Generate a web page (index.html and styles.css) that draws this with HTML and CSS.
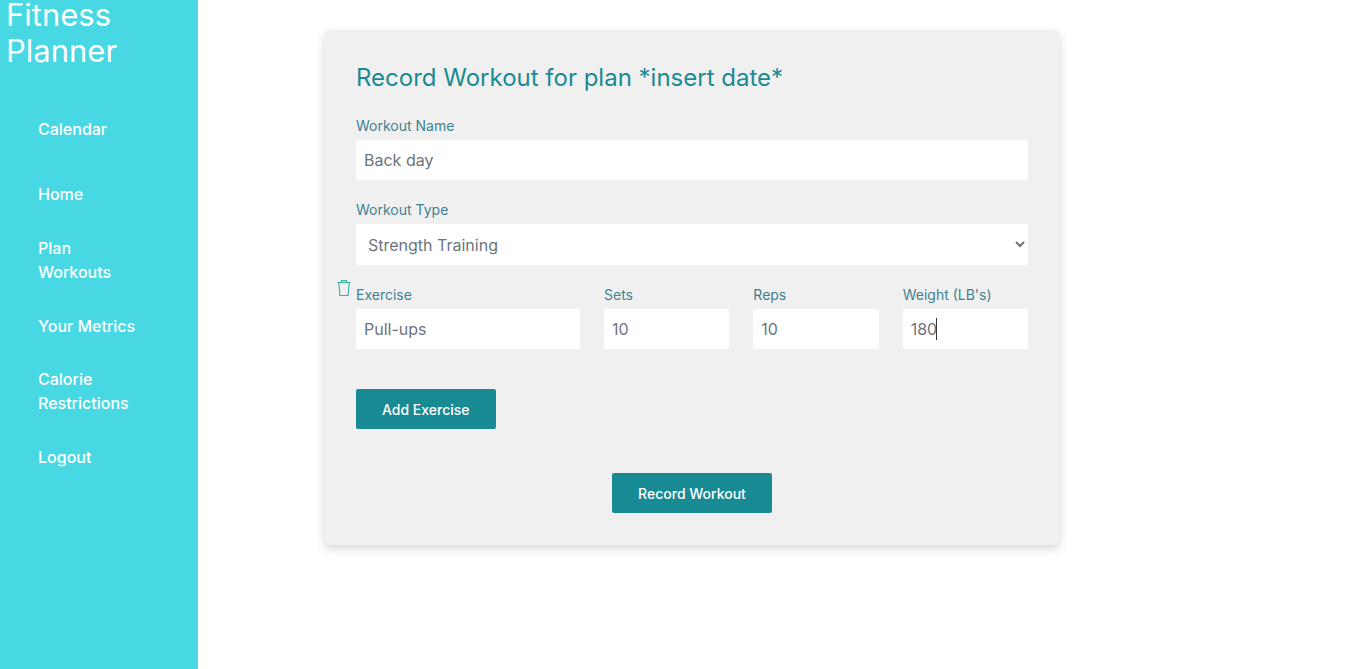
FILE: index.html
```html
<!DOCTYPE html>
<html lang="en">
  <head>
    <meta charset="UTF-8" />
    <meta name="viewport" content="width=device-width, initial-scale=1.0" />
    <title>Fitness Planner</title>
    <link rel="stylesheet" href="styles.css">
  </head>
  <body>
    <aside class="sidebar">
      <h1 class="brand">Fitness Planner</h1>
      <nav class="nav">
        <a href="#">Calendar</a>
        <a href="#">Home</a>
        <a href="#">Plan Workouts</a>
        <a href="#">Your Metrics</a>
        <a href="#">Calorie Restrictions</a>
        <a href="#">Logout</a>
      </nav>
    </aside>

    <main class="main">
      <form class="card">
        <h2>Record Workout for plan *insert date*</h2>

        <div class="field">
          <label>Workout Name</label>
          <input type="text" value="Back day" />
        </div>

        <div class="field">
          <label>Workout Type</label>
          <select>
            <option>Strength Training</option>
            <option>Cardio</option>
          </select>
        </div>

        <div class="exercise">
          <svg class="trash" width="16" height="18" viewBox="0 0 16 18" fill="none" stroke="currentColor" stroke-width="1.1">
            <path d="M1.5 3.5h13" />
            <path d="M5.5 3.5V1.5h5v2" />
            <path d="M2.8 3.5l1.1 13h8.2l1.1-13" />
          </svg>
          <div class="field">
            <label>Exercise</label>
            <input type="text" value="Pull-ups" />
          </div>
          <div class="field">
            <label>Sets</label>
            <input type="text" value="10" />
          </div>
          <div class="field">
            <label>Reps</label>
            <input type="text" value="10" />
          </div>
          <div class="field caret-field">
            <label>Weight (LB's)</label>
            <input type="text" value="180" />
            <span class="caret"></span>
          </div>
        </div>

        <button type="button" class="btn">Add Exercise</button>
        <div class="submit-row">
          <button type="button" class="btn">Record Workout</button>
        </div>
      </form>
    </main>
  </body>
</html>
```

FILE: styles.css
```css
* {
  box-sizing: border-box;
}
html,
body {
  height: 100%;
}
body {
  margin: 0;
  display: flex;
  font-family: "Inter", "Open Sans", sans-serif;
  background: white;
  overflow: hidden;
}
.sidebar {
  width: 198px;
  flex-shrink: 0;
  background: #48d8e4;
  color: white;
}
.brand {
  margin: -3px 0 0 6px;
  font-size: 31px;
  font-weight: 400;
  line-height: 36px;
  width: 150px;
}
.nav {
  display: flex;
  flex-direction: column;
  margin-top: 27px;
}
.nav a {
  height: 65.6px;
  padding: 0 50px 0 38px;
  display: flex;
  align-items: center;
  color: white;
  font-size: 16px;
  line-height: 24px;
  font-weight: 500;
  text-decoration: none;
}
.main {
  padding: 30px 0 0 126px;
}
.card {
  width: 736px;
  padding: 32px;
  background: #f0f0f0;
  border-radius: 6px;
  box-shadow: 0 4px 10px rgba(0, 0, 0, 0.15);
}
h2 {
  margin: 0 0 22px;
  font-size: 24px;
  line-height: 32px;
  font-weight: 400;
  color: #1a8a94;
}
.field {
  margin-bottom: 20px;
}
label {
  display: block;
  height: 20px;
  margin-bottom: 4px;
  font-size: 14px;
  line-height: 20px;
  color: #3f8390;
}
input,
select {
  display: block;
  width: 100%;
  height: 40px;
  padding: 0 8px;
  border: none;
  border-radius: 0;
  background: white;
  font-family: inherit;
  font-size: 16px;
  color: #6c757d;
}
select {
  height: 41px;
}
.exercise {
  position: relative;
  display: grid;
  grid-template-columns: 224px 1fr 1fr 1fr;
  gap: 24px;
  margin-top: 19px;
}
.exercise .field {
  margin-bottom: 0;
}
.trash {
  position: absolute;
  left: -20px;
  top: -6px;
  color: #3fae9f;
}
.caret-field {
  position: relative;
}
.caret {
  position: absolute;
  left: 33px;
  top: 33px;
  width: 1px;
  height: 22px;
  background: #333;
}
.btn {
  display: block;
  height: 40px;
  padding: 0 26px;
  border: none;
  border-radius: 2px;
  background: #188a94;
  color: white;
  font-family: inherit;
  font-size: 14px;
  font-weight: 500;
  cursor: pointer;
}
.exercise + .btn {
  margin-top: 40px;
}
.submit-row {
  display: flex;
  justify-content: center;
  margin-top: 44px;
}
```
